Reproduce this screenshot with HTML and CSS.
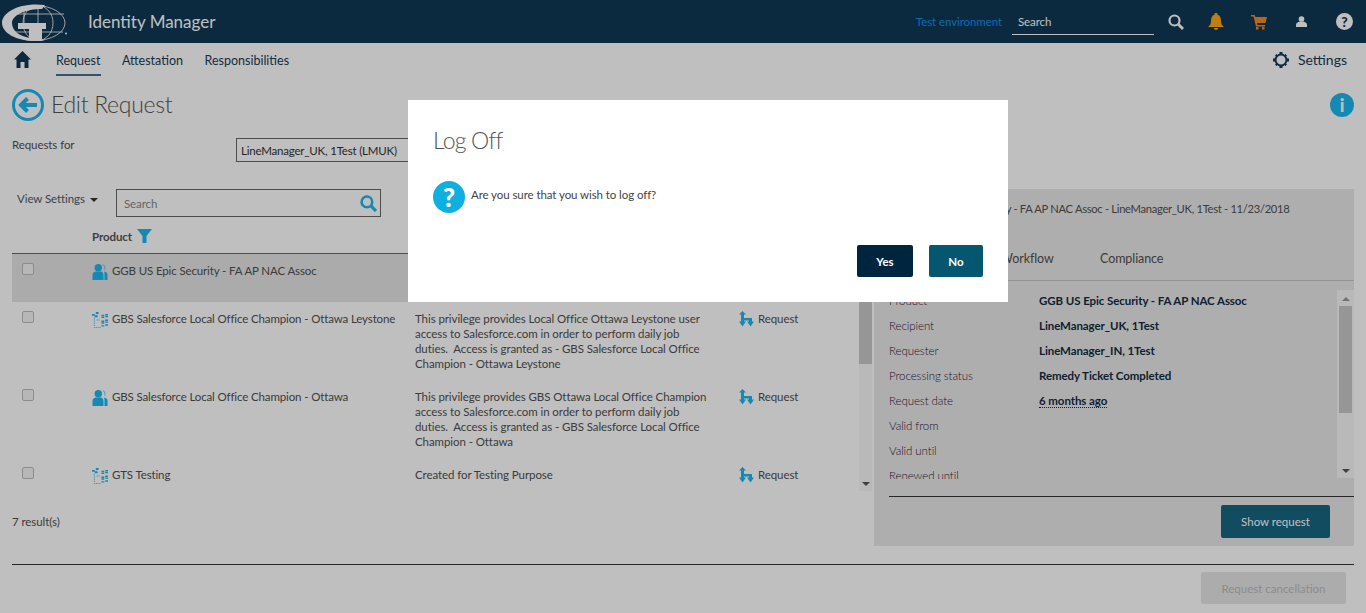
FILE: index.html
```html
<!DOCTYPE html>
<html lang="en">
<head>
    <meta charset="UTF-8">
    <title>Identity Manager</title>
    <link rel="stylesheet" href="styles.css">
</head>
<body>
    <!-- Shared icons -->
    <svg class="sprite" xmlns="http://www.w3.org/2000/svg">
        <symbol id="icon-role" viewBox="0 0 15 16">
            <path d="M9.500 0.200a3.700 3.700 0 0 1 2.200 6.400 5 5 0 0 0-2.200-6.400z"/>
            <path d="M11.500 7.500c2 .3 3.500 1.500 3.500 3.300V16h-3v-5.500c0-1.200-.2-2.200-.5-3z"/>
            <circle cx="5.800" cy="3.700" r="3.700"/>
            <path d="M0 16v-5c0-2.200 1.800-3.500 3.500-3.500h4.500c1.700 0 3 1.500 3 3.500v5z"/>
        </symbol>
        <symbol id="icon-tree" viewBox="0 0 17 17">
            <path d="M0 2h3v2H0zM4 0h3v2H4zM3 3.500h3v2H3zM10 3h3v1.500h-3zM14 2h3v1.500h-3zM10 5h3v1.500h-3zM14 4h3v1.500h-3zM10 9h3v1.500h-3zM14 8h3v1.500h-3zM10 11h3v1.500h-3zM14 10h3v1.500h-3zM10 14h3v1.500h-3zM14 13h3v1.500h-3z"/>
            <path class="dots" d="M2.500 6v10.500h7M5 8.500h4"/>
        </symbol>
        <symbol id="icon-flow" viewBox="0 0 15 16">
            <path d="M3.500 0l3.500 3.500H5v7.500H2V3.500H0z"/>
            <path d="M4 7h9v4h-3V9.500H4z"/>
            <path d="M0 10.500h7l-3.500 5zM8 10.500h7l-3.500 5z"/>
        </symbol>
    </svg>

    <div class="page">
        <header class="topbar">
            <svg class="logo" viewBox="0 0 68 43">
                <ellipse cx="35" cy="23" rx="30" ry="17.500" fill="none" stroke="#fff" stroke-width=".8"/>
                <ellipse cx="38" cy="23" rx="15" ry="17.500" fill="none" stroke="#fff" stroke-width=".8"/>
                <path d="M38 5v36M15 14h49M11 32h52M24 8v15" fill="none" stroke="#fff" stroke-width=".8"/>
                <path d="M45 5C20 2 2 12 2 23s18 20.500 43 17.500L30 38C18 36 12 30 12 23 12 15 26 9 42 9z" fill="#fff"/>
                <path d="M18 23h28v6h-4v11H29V29H18z" fill="#fff"/>
                <circle cx="66" cy="33.500" r="1" fill="#fff"/>
            </svg>
            <span class="app-name">Identity Manager</span>
            <span class="env-label">Test environment</span>
            <div class="top-search">Search</div>
            <svg class="top-icon search-icon" viewBox="0 0 16 16"><circle cx="6.500" cy="6.500" r="5" fill="none" stroke="#fff" stroke-width="2.200"/><path d="M10.500 10.500l4.500 4.500" stroke="#fff" stroke-width="2.800"/></svg>
            <svg class="top-icon bell-icon" viewBox="0 0 16 17"><path d="M8 0a1.500 1.500 0 0 1 1.500 1.800C12 2.500 13 5 13 8c0 3 1 4.500 3 6H0c2-1.500 3-3 3-6 0-3 1-5.500 3.500-6.200A1.500 1.500 0 0 1 8 0zM6 15h4a2 2 0 0 1-4 0z" fill="#ffa914"/></svg>
            <svg class="top-icon cart-icon" viewBox="0 0 16 16"><path d="M0 1h3.500l1 2H16l-1.500 6H6l.5 2h7.500v1.500H5L2.500 2.500H0z" fill="#f58a1e"/><rect x="5" y="13" width="2.500" height="2.500" fill="#f58a1e"/><rect x="11" y="13" width="2.500" height="2.500" fill="#f58a1e"/></svg>
            <svg class="top-icon user-icon" viewBox="0 0 11 11"><circle cx="5.500" cy="3" r="2.800" fill="#fff"/><path d="M0 11V8.500C0 7 2 6 3.500 5.500h4C9 6 11 7 11 8.500V11z" fill="#fff"/></svg>
            <span class="help-badge">?</span>
        </header>

        <nav class="subnav">
            <svg class="home-icon" viewBox="0 0 17 17"><path d="M8.500 0L17 8.500h-2.500V17h-4v-6h-4v6h-4V8.500H0z"/></svg>
            <a class="subnav-item active">Request</a>
            <a class="subnav-item">Attestation</a>
            <a class="subnav-item">Responsibilities</a>
            <span class="settings">
                <svg class="gear-icon" viewBox="0 0 16 16"><circle cx="8" cy="8" r="5.500" fill="none" stroke="#103a58" stroke-width="2"/><path d="M6.500 0h3v2h-3zM6.500 14h3v2h-3zM0 6.500h2v3H0zM14 6.500h2v3h-2zM2 3.500L3.500 2l1.500 1.500L3.500 5zM11 12.500l1.500-1.500 1.500 1.500-1.500 1.500zM2 12.500L3.500 11 5 12.500 3.500 14zM11 3.500L12.500 2 14 3.500 12.500 5z" fill="#103a58"/></svg>
                Settings
            </span>
        </nav>

        <div class="title-row">
            <svg class="back-icon" viewBox="0 0 32 32"><circle cx="16" cy="16" r="14.500" fill="none" stroke="#1cb7ef" stroke-width="3"/><path d="M9 16h16M15.500 9.500L9 16l6.500 6.500" fill="none" stroke="#1cb7ef" stroke-width="4"/></svg>
            <h1>Edit Request</h1>
            <span class="info-badge">i</span>
        </div>

        <div class="requests-for">
            <label>Requests for</label>
            <div class="recipient-box">LineManager_UK, 1Test (LMUK)</div>
        </div>

        <div class="content">
            <section class="list-pane">
                <div class="toolbar">
                    <span class="view-settings">View Settings <i class="caret"></i></span>
                    <div class="list-search">
                        <span>Search</span>
                        <svg class="list-search-icon" viewBox="0 0 16 16"><circle cx="6.500" cy="6.500" r="5" fill="none" stroke="#1cb7ef" stroke-width="2.400"/><path d="M10.500 10.500l4.500 4.500" stroke="#1cb7ef" stroke-width="3"/></svg>
                    </div>
                </div>
                <div class="list-head">
                    Product
                    <svg class="filter-icon" viewBox="0 0 15 14"><path d="M0 0h15L9.500 7v7h-4V7z"/></svg>
                </div>
                <div class="list-body">
                    <div class="rows">
                        <div class="row selected">
                            <span class="check"></span>
                            <div class="product"><svg class="row-icon"><use href="#icon-role"/></svg>GGB US Epic Security - FA AP NAC Assoc</div>
                            <div class="desc"></div>
                            <div class="action"><svg class="flow-icon"><use href="#icon-flow"/></svg>Request</div>
                        </div>
                        <div class="row">
                            <span class="check"></span>
                            <div class="product"><svg class="row-icon"><use href="#icon-tree"/></svg>GBS Salesforce Local Office Champion - Ottawa Leystone</div>
                            <div class="desc">This privilege provides Local Office Ottawa Leystone user access to Salesforce.com in order to perform daily job duties.&nbsp; Access is granted as - GBS Salesforce Local Office Champion - Ottawa Leystone</div>
                            <div class="action"><svg class="flow-icon"><use href="#icon-flow"/></svg>Request</div>
                        </div>
                        <div class="row">
                            <span class="check"></span>
                            <div class="product"><svg class="row-icon"><use href="#icon-role"/></svg>GBS Salesforce Local Office Champion - Ottawa</div>
                            <div class="desc">This privilege provides GBS Ottawa Local Office Champion access to Salesforce.com in order to perform daily job duties.&nbsp; Access is granted as - GBS Salesforce Local Office Champion - Ottawa</div>
                            <div class="action"><svg class="flow-icon"><use href="#icon-flow"/></svg>Request</div>
                        </div>
                        <div class="row">
                            <span class="check"></span>
                            <div class="product"><svg class="row-icon"><use href="#icon-tree"/></svg>GTS Testing</div>
                            <div class="desc">Created for Testing Purpose</div>
                            <div class="action"><svg class="flow-icon"><use href="#icon-flow"/></svg>Request</div>
                        </div>
                    </div>
                    <div class="scrollbar list-scroll">
                        <i class="arrow-up"></i>
                        <b class="thumb"></b>
                        <i class="arrow-down"></i>
                    </div>
                </div>
                <div class="results">7 result(s)</div>
            </section>

            <aside class="detail-pane">
                <div class="detail-title">GGB US Epic Security - FA AP NAC Assoc - LineManager_UK, 1Test - 11/23/2018</div>
                <div class="tabs">
                    <span class="tab workflow">Workflow</span>
                    <span class="tab">Compliance</span>
                </div>
                <div class="detail-body">
                    <dl class="facts">
                        <dt>Product</dt><dd>GGB US Epic Security - FA AP NAC Assoc</dd>
                        <dt>Recipient</dt><dd>LineManager_UK, 1Test</dd>
                        <dt>Requester</dt><dd>LineManager_IN, 1Test</dd>
                        <dt>Processing status</dt><dd>Remedy Ticket Completed</dd>
                        <dt>Request date</dt><dd><span class="dotted">6 months ago</span></dd>
                        <dt>Valid from</dt><dd></dd>
                        <dt>Valid until</dt><dd></dd>
                        <dt>Renewed until</dt><dd></dd>
                    </dl>
                    <div class="scrollbar detail-scroll">
                        <i class="arrow-up"></i>
                        <b class="thumb"></b>
                        <i class="arrow-down"></i>
                    </div>
                </div>
                <div class="detail-foot">
                    <button class="btn btn-teal show-request">Show request</button>
                </div>
            </aside>
        </div>

        <footer class="page-foot">
            <button class="btn btn-disabled">Request cancellation</button>
        </footer>
    </div>

    <!-- Log off dialog -->
    <div class="overlay"></div>
    <div class="dialog">
        <h2>Log Off</h2>
        <div class="dialog-msg">
            <span class="question-badge">?</span>
            <span class="dialog-text">Are you sure that you wish to log off?</span>
        </div>
        <div class="dialog-actions">
            <button class="btn btn-navy">Yes</button>
            <button class="btn btn-teal-dark">No</button>
        </div>
    </div>
</body>
</html>
```

FILE: styles.css
```css
/* General styling */
body {
    margin: 0;
    height: 613px;
    overflow: hidden;
    font-family: "Lato", "Open Sans", sans-serif;
    font-size: 11.5px;
    letter-spacing: -0.08px;
    color: #505050;
    background-color: #fff;
}

h1, h2, dl, dd {
    margin: 0;
    font-weight: 300;
}

.sprite {
    display: none;
}

.page {
    height: 613px;
    display: flex;
    flex-direction: column;
}

/* Top bar */
.topbar {
    height: 43px;
    flex: none;
    display: flex;
    align-items: center;
    background-color: #113854;
    color: #fff;
}

.logo {
    width: 68px;
    height: 43px;
    flex: none;
}

.app-name {
    margin-left: 20px;
    font-size: 17px;
    letter-spacing: 0;
}

.env-label {
    margin-left: auto;
    color: #0f8fef;
}

.top-search {
    width: 136px;
    height: 27px;
    margin-left: 10px;
    padding-left: 6px;
    line-height: 29px;
    border-bottom: 1px solid #fff;
    position: relative;
    top: -1px;
}

.top-icon {
    flex: none;
}

.search-icon {
    width: 16px;
    height: 16px;
    margin-left: 14px;
}

.bell-icon {
    width: 16px;
    height: 17px;
    margin-left: 24px;
}

.cart-icon {
    width: 16px;
    height: 16px;
    margin-left: 27px;
}

.user-icon {
    width: 11px;
    height: 11px;
    margin-left: 29px;
}

.help-badge {
    width: 17px;
    height: 17px;
    margin-left: 29px;
    margin-right: 13px;
    border-radius: 50%;
    background-color: #fff;
    color: #113854;
    font-size: 14px;
    font-weight: 900;
    line-height: 17px;
    text-align: center;
}

/* Sub navigation */
.subnav {
    height: 33px;
    flex: none;
    display: flex;
    align-items: center;
    padding: 0 19px 0 14px;
    font-size: 12.5px;
    letter-spacing: 0;
    color: #1a3a55;
}

.home-icon {
    width: 17px;
    height: 17px;
    margin-right: 25px;
    fill: #113854;
}

.subnav-item {
    height: 33px;
    line-height: 35px;
    margin-right: 21.5px;
    box-sizing: border-box;
}

.subnav-item.active {
    border-bottom: 2px solid #4a6c96;
}

.settings {
    margin-left: auto;
    display: flex;
    align-items: center;
    gap: 9px;
    font-size: 14px;
}

.gear-icon {
    width: 16px;
    height: 16px;
}

/* Page title */
.title-row {
    height: 58px;
    flex: none;
    display: flex;
    align-items: center;
    padding: 0 12px;
    box-sizing: border-box;
}

.back-icon {
    width: 32px;
    height: 32px;
    margin-top: -1px;
}

h1 {
    margin-left: 7px;
    margin-top: -2px;
    font-size: 23px;
    letter-spacing: -0.3px;
    color: #555;
}

.info-badge {
    width: 24px;
    height: 24px;
    margin-left: auto;
    border-radius: 50%;
    background-color: #1cb7ef;
    color: #fff;
    font-size: 18px;
    font-weight: 900;
    line-height: 24px;
    text-align: center;
}

.requests-for {
    height: 55px;
    flex: none;
    display: flex;
    padding: 4px 12px 0;
    box-sizing: border-box;
}

.requests-for label {
    width: 224px;
}

.recipient-box {
    width: 400px;
    height: 24px;
    padding-left: 4px;
    line-height: 24px;
    border: 1px solid #666;
    box-sizing: border-box;
    letter-spacing: -0.2px;
    color: #333;
}

/* Main content */
.content {
    display: flex;
    gap: 2px;
    padding: 0 12px;
    height: 357px;
    flex: none;
}

.list-pane {
    width: 860px;
    flex: none;
    display: flex;
    flex-direction: column;
}

.toolbar {
    height: 28px;
    flex: none;
    display: flex;
    align-items: center;
    padding-left: 5px;
}

.view-settings {
    width: 99px;
    color: #4a5a68;
    margin-top: -9px;
}

.caret {
    display: inline-block;
    margin-left: 2px;
    vertical-align: middle;
    border: 4px solid transparent;
    border-top-color: #333;
    border-bottom: 0;
}

.list-search {
    width: 265px;
    height: 28px;
    display: flex;
    align-items: center;
    justify-content: space-between;
    padding: 0 3px 0 7px;
    box-sizing: border-box;
    border: 1px solid #666;
    color: #888;
}

.list-search-icon {
    width: 17px;
    height: 17px;
}

.list-head {
    height: 37px;
    flex: none;
    display: flex;
    align-items: center;
    gap: 5px;
    padding-left: 80px;
    padding-top: 2px;
    box-sizing: border-box;
    border-bottom: 1px solid #666;
    font-weight: 700;
    color: #555;
}

.filter-icon {
    width: 15px;
    height: 14px;
    fill: #1cb7ef;
}

.list-body {
    height: 237px;
    flex: none;
    display: flex;
    overflow: hidden;
}

.rows {
    width: 847px;
    flex: none;
}

.row {
    display: grid;
    grid-template-columns: 80px 323px 324px 120px;
    height: 78px;
    padding-top: 9px;
    box-sizing: border-box;
    line-height: 15px;
}

.row.selected {
    height: 48px;
    background-color: #e4e4e4;
}

.check {
    width: 10px;
    height: 10px;
    margin: 0 0 0 10px;
    border: 1px solid #bbb;
    border-radius: 2px;
    background-color: #f4f4f4;
}

.product {
    display: flex;
    align-items: flex-start;
    gap: 4px;
    letter-spacing: -0.13px;
    white-space: nowrap;
}

.row-icon {
    width: 16px;
    height: 16px;
    margin-top: 1px;
    fill: #1cb7ef;
    flex: none;
}

.dots {
    fill: none;
    stroke: #1cb7ef;
    stroke-width: 1;
    stroke-dasharray: 1 1;
}

.desc {
    padding-right: 31px;
}

.action {
    display: flex;
    gap: 4px;
}

.flow-icon {
    width: 15px;
    height: 16px;
    fill: #1cb7ef;
    flex: none;
}

.scrollbar {
    width: 13px;
    flex: none;
    background-color: #f7f7f7;
    display: flex;
    flex-direction: column;
    align-items: center;
}

.thumb {
    width: 13px;
    background-color: #c9c9c9;
}

.list-scroll .thumb {
    height: 94px;
}

.arrow-up,
.arrow-down {
    border: 4px solid transparent;
}

.arrow-up {
    border-top: 0;
    border-bottom-color: #999;
    margin: 7px 0 5px;
}

.arrow-down {
    margin-top: auto;
    margin-bottom: 5px;
    border-bottom: 0;
    border-top-color: #555;
}

.results {
    padding-top: 24px;
}

/* Detail panel */
.detail-pane {
    width: 480px;
    flex: none;
    display: flex;
    flex-direction: column;
    background-color: #e9e9e9;
}

.detail-title {
    height: 40px;
    flex: none;
    padding: 13px 0 0 36px;
    box-sizing: border-box;
    font-size: 11.2px;
    letter-spacing: -0.3px;
    white-space: nowrap;
}

.tabs {
    height: 52px;
    flex: none;
    display: flex;
    align-items: center;
    padding: 8px 0 0 126px;
    box-sizing: border-box;
    border-bottom: 1px solid #c4c4c4;
    font-size: 12.5px;
}

.tab.workflow {
    width: 100px;
}

.detail-body {
    display: flex;
    height: 215px;
    flex: none;
    padding-top: 9px;
    box-sizing: border-box;
}

.facts {
    flex: 1;
    height: 191px;
    overflow: hidden;
    margin-left: 15px;
    display: grid;
    grid-template-columns: 150px 1fr;
    grid-auto-rows: 25px;
    align-items: center;
    margin-top: -2px;
    color: #2a2035;
}

.facts dd {
    font-weight: 700;
    color: #122c42;
}

.dotted {
    border-bottom: 1px dotted #122c42;
}

.detail-scroll {
    width: 17px;
    height: 188px;
}

.detail-scroll .thumb {
    height: 107px;
    width: 13px;
}

.detail-foot {
    height: 50px;
    flex: none;
    margin-left: 15px;
    border-top: 1px solid #333;
    display: flex;
    justify-content: flex-end;
    padding: 8px 24px 0 0;
    box-sizing: border-box;
}

/* Buttons */
.btn {
    border: none;
    border-radius: 2px;
    font-family: inherit;
    font-size: 11.5px;
    color: #fff;
}

.btn-teal {
    background-color: #176680;
}

.show-request {
    width: 109px;
    height: 33px;
}

.btn-disabled {
    width: 145px;
    height: 32px;
    background-color: #e6e6e6;
    color: #bbb;
}

.btn-navy {
    width: 56px;
    background-color: #00263f;
    font-weight: 700;
}

.btn-teal-dark {
    width: 54px;
    background-color: #05566f;
    font-weight: 700;
}

.page-foot {
    height: 49px;
    flex: none;
    margin: 18px 12px 0;
    padding: 7px 8px 0 0;
    box-sizing: border-box;
    border-top: 1px solid #333;
    display: flex;
    justify-content: flex-end;
}

/* Dialog */
.overlay {
    position: fixed;
    inset: 0;
    background-color: rgba(0, 0, 0, 0.25);
}

.dialog {
    position: fixed;
    left: 408px;
    top: 100px;
    width: 600px;
    height: 202px;
    padding: 25px 25px 0;
    box-sizing: border-box;
    display: flex;
    flex-direction: column;
    background-color: #fff;
}

.dialog h2 {
    font-size: 23px;
    line-height: 30px;
    letter-spacing: -0.8px;
    color: #555;
}

.dialog-msg {
    display: flex;
    align-items: center;
    gap: 6px;
    margin-top: 26px;
    color: #444;
}

.dialog-text {
    margin-bottom: 6px;
}

.question-badge {
    width: 32px;
    height: 32px;
    border-radius: 50%;
    background-color: #0fb0e0;
    color: #fff;
    font-size: 26px;
    font-weight: 900;
    line-height: 32px;
    text-align: center;
}

.dialog-actions {
    display: flex;
    justify-content: flex-end;
    gap: 16px;
    height: 32px;
    margin-top: 32px;
}
```
